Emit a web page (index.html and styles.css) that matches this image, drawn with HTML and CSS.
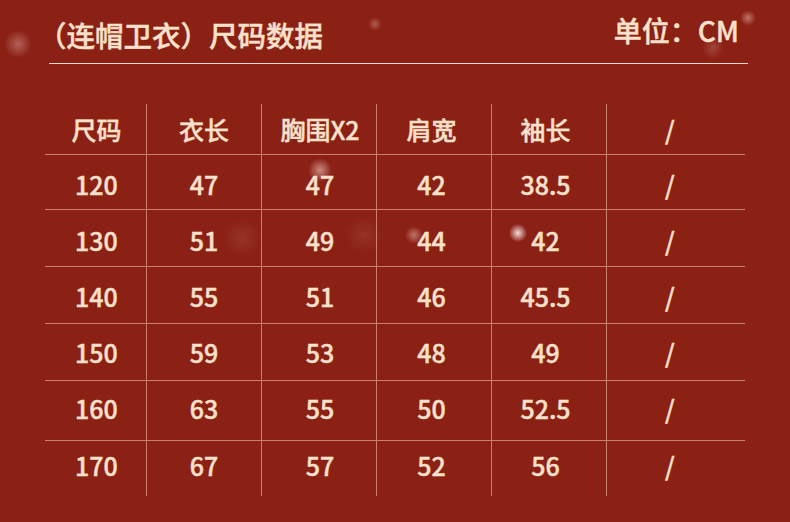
FILE: index.html
```html
<!DOCTYPE html>
<html lang="zh">
<head>
<meta charset="utf-8">
<title>尺码数据</title>
<link rel="stylesheet" href="styles.css">
</head>
<body>
<div class="page">
  <span class="spot s1"></span>
  <span class="spot s2"></span>
  <span class="spot s3"></span>
  <span class="spot s4"></span>
  <span class="spot s5"></span>
  <span class="spot s6"></span>
  <span class="spot s7"></span>
  <span class="spot s8"></span>
  <span class="spot s9"></span>
  <header class="head">
    <h1 class="title">（连帽卫衣）尺码数据</h1>
    <div class="unit">单位：CM</div>
  </header>
  <div class="grid">
    <div class="row hrow"><div>尺码</div><div>衣长</div><div>胸围X2</div><div>肩宽</div><div>袖长</div><div>/</div></div>
    <div class="row"><div>120</div><div>47</div><div>47</div><div>42</div><div>38.5</div><div>/</div></div>
    <div class="row"><div>130</div><div>51</div><div>49</div><div>44</div><div>42</div><div>/</div></div>
    <div class="row"><div>140</div><div>55</div><div>51</div><div>46</div><div>45.5</div><div>/</div></div>
    <div class="row"><div>150</div><div>59</div><div>53</div><div>48</div><div>49</div><div>/</div></div>
    <div class="row"><div>160</div><div>63</div><div>55</div><div>50</div><div>52.5</div><div>/</div></div>
    <div class="row"><div>170</div><div>67</div><div>57</div><div>52</div><div>56</div><div>/</div></div>
  </div>
</div>
</body>
</html>
```

FILE: styles.css
```css
html, body {
  margin: 0;
  padding: 0;
}
body {
  background: #8b2015;
  font-family: "Noto Sans CJK SC", "Noto Sans", sans-serif;
  color: #f9e1cb;
}
.page {
  position: relative;
  width: 790px;
  height: 522px;
  overflow: hidden;
  background: #8b2015;
}
.head {
  display: flex;
  justify-content: space-between;
  align-items: flex-start;
  margin-left: 49px;
  width: 699px;
  height: 63px;
  border-bottom: 1px solid #f1d7cc;
}
.title {
  margin: 21px 0 0 -11px;
  font-size: 28.5px;
  line-height: 28px;
  font-weight: 500;
  -webkit-text-stroke: 0.4px #f9e1cb;
}
.unit {
  margin: 16px 9px 0 0;
  font-size: 28px;
  line-height: 28px;
  font-weight: 500;
  -webkit-text-stroke: 0.4px #f9e1cb;
}
.grid {
  margin: 40px 0 0 45px;
  width: 700px;
}
.row {
  display: grid;
  grid-template-columns: 102px 115px 115px 115px 115px 138px;
  border-bottom: 1px solid rgba(240, 180, 160, 0.65);
  box-sizing: border-box;
}
.row > div {
  display: flex;
  align-items: center;
  justify-content: center;
  font-size: 25px;
  font-weight: 500;
  -webkit-text-stroke: 0.4px #f9e1cb;
  border-right: 1px solid rgba(240, 180, 160, 0.65);
}
.row > div:nth-child(1) { padding-left: 2px; }
.row > div:nth-child(3) { padding-left: 2px; }
.row > div:nth-child(4) { padding-right: 5px; }
.row > div:nth-child(5) { padding-right: 7px; }
.row > div:last-child {
  border-right: none;
  padding-right: 12px;
}
.row:nth-child(1) { height: 51px; }
.row:nth-child(2) { height: 55px; }
.row:nth-child(2) > div { padding-top: 3px; }
.row:nth-child(3) { height: 57px; }
.row:nth-child(3) > div { padding-top: 3px; }
.row:nth-child(4) { height: 57px; }
.row:nth-child(4) > div { padding-top: 1px; }
.row:nth-child(5) { height: 57px; }
.row:nth-child(5) > div { padding-bottom: 1px; }
.row:nth-child(6) { height: 60px; }
.row:nth-child(6) > div { padding-bottom: 6px; }
.row:nth-child(7) { height: 55px; border-bottom: none; }
.row:nth-child(7) > div { padding-bottom: 7px; }
.spot {
  position: absolute;
  border-radius: 50%;
  pointer-events: none;
}
.s1 { left: 4px; top: 30px; width: 28px; height: 28px; background: radial-gradient(circle, rgba(255,220,210,0.35), rgba(255,220,210,0) 70%); }
.s2 { left: 368px; top: 17px; width: 14px; height: 14px; background: radial-gradient(circle, rgba(255,220,210,0.3), rgba(255,220,210,0) 70%); }
.s3 { left: 508px; top: 223px; width: 20px; height: 20px; background: radial-gradient(circle, rgba(255,240,240,0.9), rgba(255,220,210,0) 65%); }
.s4 { left: 405px; top: 226px; width: 18px; height: 18px; background: radial-gradient(circle, rgba(255,220,210,0.45), rgba(255,220,210,0) 70%); }
.s5 { left: 308px; top: 158px; width: 24px; height: 24px; background: radial-gradient(circle, rgba(255,225,215,0.55), rgba(255,220,210,0) 70%); }
.s6 { left: 740px; top: 10px; width: 16px; height: 16px; background: radial-gradient(circle, rgba(255,220,210,0.45), rgba(255,220,210,0) 70%); }
.s7 { left: 702px; top: 37px; width: 22px; height: 22px; background: radial-gradient(circle, rgba(255,220,210,0.2), rgba(255,220,210,0) 70%); }
.s8 { left: 222px; top: 218px; width: 40px; height: 40px; background: radial-gradient(circle, rgba(255,220,210,0.1), rgba(255,220,210,0) 70%); }
.s9 { left: 344px; top: 215px; width: 40px; height: 40px; background: radial-gradient(circle, rgba(255,220,210,0.09), rgba(255,220,210,0) 70%); }
```
